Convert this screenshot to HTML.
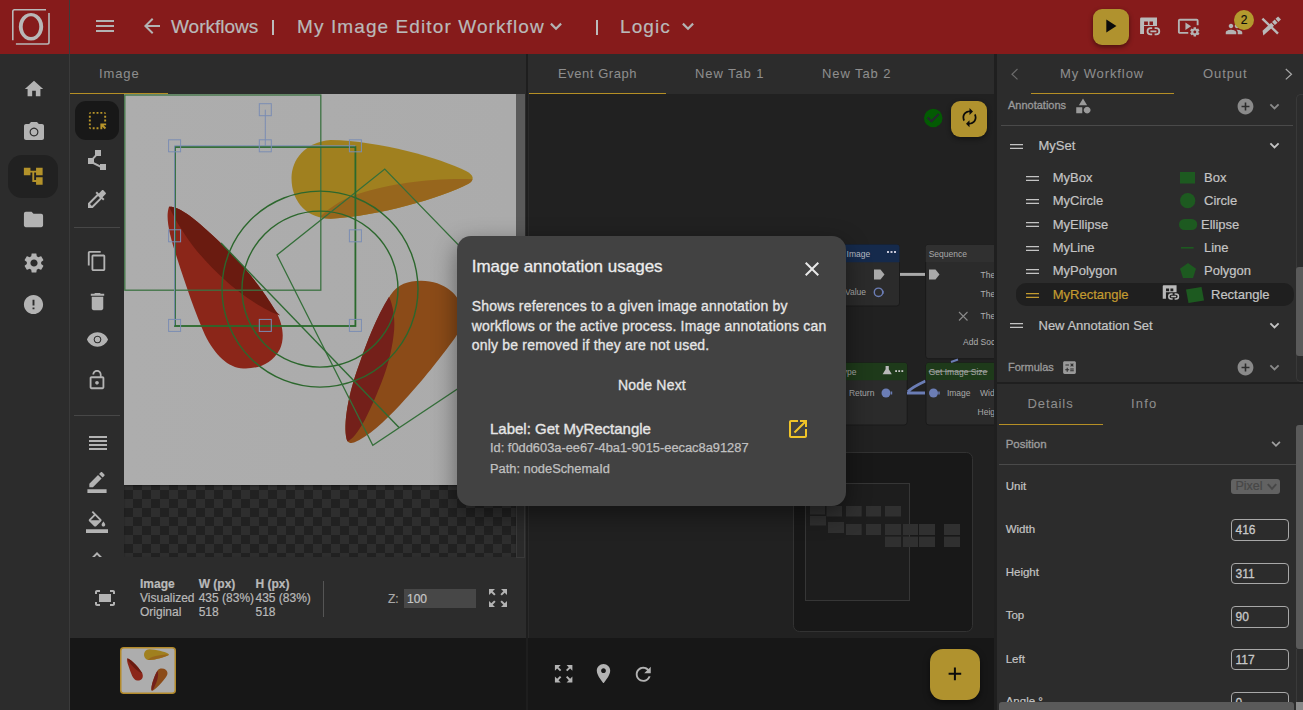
<!DOCTYPE html>
<html><head><meta charset="utf-8">
<style>
*{box-sizing:border-box;margin:0;padding:0}
html,body{width:1303px;height:710px;overflow:hidden;background:#2c2c2c;font-family:"Liberation Sans",sans-serif;color:#b0b0b0;-webkit-text-stroke:0.2px currentColor}
.a{position:absolute}
svg{display:block}
.hdr{left:0;top:0;width:1303px;height:54px;background:#861b1b}
.ht{top:16px;font-size:19px;color:#b9b9b9;white-space:nowrap;line-height:22px}
.side{left:0;top:54px;width:69px;height:656px;background:#2c2c2c}
.vline{background:#3f3f3f}
.tab{font-size:13px;color:#8e8e8e;letter-spacing:0.9px;white-space:nowrap;line-height:16px;-webkit-text-stroke:0.05px #8e8e8e}
.uline{height:1.2px;background:#b58f25}
.ic{fill:#b3b3b3}
</style></head><body>
<!-- HEADER -->
<div class="a hdr"></div>
<svg class="a" style="left:0;top:0" width="69" height="54">
 <path d="M12.8 40.2 V11.5 Q12.8 9.8 14.5 9.8 H46" fill="none" stroke="#b8b8b8" stroke-width="1.6"/>
 <path d="M49 13.1 V42.3 Q49 44 47.3 44 H15.9" fill="none" stroke="#b8b8b8" stroke-width="1.6"/>
 <path fill-rule="evenodd" fill="#b8b8b8" d="M31 12.9 a12.2 13.8 0 1 0 0.01 0 Z M31 16.3 a8.3 10.4 0 1 1 -0.01 0 Z"/>
</svg>
<svg class="a ic" style="left:93px;top:14px" width="24" height="24" viewBox="0 0 24 24"><path d="M3 18h18v-2H3v2zm0-5h18v-2H3v2zm0-7v2h18V6H3z"/></svg>
<svg class="a ic" style="left:140px;top:14px" width="24" height="24" viewBox="0 0 24 24"><path d="M20 11H7.83l5.59-5.59L12 4l-8 8 8 8 1.41-1.41L7.83 13H20v-2z"/></svg>
<div class="a ht m" style="left:171px">Workflows</div>
<div class="a" style="left:272.3px;top:20px;width:2.2px;height:15px;background:#bcbcbc"></div>
<div class="a ht m" style="left:297px;letter-spacing:1.1px">My Image Editor Workflow</div>
<svg class="a" style="left:544px;top:14px" width="24" height="24" viewBox="0 0 24 24"><path fill="none" stroke="#b3b3b3" stroke-width="2.2" d="M6.9 9.6 L12 14.7 L17.1 9.6"/></svg>
<div class="a" style="left:595.6px;top:20px;width:2.2px;height:15px;background:#bcbcbc"></div>
<div class="a ht m" style="left:620px;letter-spacing:1.1px">Logic</div>
<svg class="a" style="left:676.3px;top:14px" width="24" height="24" viewBox="0 0 24 24"><path fill="none" stroke="#b3b3b3" stroke-width="2.2" d="M6.9 9.6 L12 14.7 L17.1 9.6"/></svg>
<div class="a" style="left:1093px;top:9px;width:36px;height:36px;border-radius:9px;background:#b0922e;box-shadow:0 2px 5px rgba(0,0,0,.45)"></div>
<svg class="a" style="left:1099.2px;top:15.1px" width="22" height="22" viewBox="0 0 24 24"><path d="M8 5v14l11-7z" fill="#0b0b0b"/></svg>
<svg class="a" style="left:1138px;top:16px" width="24" height="22" viewBox="0 0 24 22">
 <path fill="#b9b9b9" fill-rule="evenodd" d="M2.1 2.7 Q2.1 1.5 3.3 1.5 H19 V10.1 H6 V17.9 H2.1 Z M6.1 5.6 h3.8 v3.4 h-3.8 Z M11.5 5.6 h3.5 v3.4 h-3.5 Z"/>
 <path fill="none" stroke="#b9b9b9" stroke-width="1.8" d="M14.2 12.2 h-1.6 a3.1 3.1 0 0 0 0 6.2 h1.6 M16.6 12.2 h1.6 a3.1 3.1 0 0 1 0 6.2 h-1.6 M12.4 15.3 h6"/>
</svg>
<svg class="a ic" style="left:1177px;top:14.5px" width="22.5" height="22.5" viewBox="0 0 24 24"><path d="M3 6h18v5h2V6c0-1.1-.9-2-2-2H3c-1.1 0-2 .9-2 2v12c0 1.1.9 2 2 2h9v-2H3V6z M15 12L9 8v8z M22.71 18.43c.03-.29.04-.58.01-.86l1.07-.85c.1-.08.12-.21.06-.32l-1.03-1.79c-.06-.11-.19-.15-.31-.11L21.23 15c-.23-.17-.48-.31-.75-.42l-.2-1.360c-.02-.13-.12-.22-.25-.22h-2.07c-.13 0-.23.09-.25.21l-.2 1.36c-.26.11-.51.26-.74.42l-1.28-.5c-.12-.05-.25 0-.31.11l-1.03 1.79c-.06.11-.04.24.06.32l1.07.86c-.03.29-.04.58-.01.86l-1.070.85c-.1.08-.12.21-.06.32l1.03 1.79c.06.11.19.15.31.11l1.27-.5c.23.17.48.31.75.42l.2 1.36c.02.13.12.22.25.22h2.07c.13 0 .23-.09.25-.21l.2-1.36c.26-.11.51-.26.74-.42l1.28.5c.12.05.25 0 .31-.11l1.03-1.79c.06-.11.04-.24-.06-.32l-1.09-.86zM19 19.5c-.83 0-1.5-.67-1.5-1.5s.67-1.5 1.5-1.5 1.5.67 1.5 1.5-.67 1.5-1.5 1.5z"/></svg>
<svg class="a ic" style="left:1225.3px;top:19.8px" width="18" height="18" viewBox="0 0 24 24"><path d="M16 11c1.66 0 2.99-1.34 2.99-3S17.66 5 16 5c-1.66 0-3 1.34-3 3s1.34 3 3 3zm-8 0c1.660 0 2.99-1.34 2.99-3S9.66 5 8 5C6.34 5 5 6.34 5 8s1.34 3 3 3zm0 2c-2.33 0-7 1.17-7 3.5V19h14v-2.5c0-2.33-4.67-3.5-7-3.5zm8 0c-.29 0-.62.02-.97.05 1.16.84 1.97 1.97 1.97 3.45V19h6v-2.5c0-2.33-4.67-3.5-7-3.5z"/></svg>
<div class="a" style="left:1234px;top:10px;width:20px;height:20px;border-radius:50%;background:#b39a2e;color:#0b0b0b;font-size:12px;line-height:20px;text-align:center">2</div>
<svg class="a" style="left:1260px;top:16px" width="22" height="20" viewBox="0 0 22 20">
 <path d="M2.4 2.6 L18 17.6" stroke="#b9b9b9" stroke-width="2.4" fill="none"/>
 <g transform="translate(10.75 10) rotate(-42.4)" fill="#b9b9b9">
  <path d="M-11.85 2 L-9.2 -2.1 H2.6 V2.1 Z"/>
  <rect x="3.7" y="-2.1" width="3.6" height="4.2"/>
  <rect x="8.4" y="-2.1" width="3.5" height="4.2"/>
 </g>
</svg>
<div class="a vline" style="left:69px;top:0;width:1px;height:710px;background:#3c3c3c"></div>

<!-- LEFT SIDEBAR -->
<div class="a" style="left:0;top:54px;width:69px;height:656px;background:#2c2c2c"></div>
<svg class="a ic" style="left:23px;top:77.5px" width="22" height="22" viewBox="0 0 24 24"><path d="M10 20v-6h4v6h5v-8h3L12 3 2 12h3v8z"/></svg>
<svg class="a ic" style="left:22px;top:120px" width="24" height="24" viewBox="0 0 24 24"><path fill-rule="evenodd" d="M9 2L7.17 4H4c-1.1 0-2 .9-2 2v12c0 1.1.9 2 2 2h16c1.1 0 2-.9 2-2V6c0-1.1-.9-2-2-2h-3.17L15 2H9z M12 7.6a4.4 4.4 0 1 0 0.01 0z M12 8.7a3.3 3.3 0 1 1 -0.01 0z"/></svg>
<div class="a" style="left:8px;top:155px;width:50px;height:43px;border-radius:14px;background:#212121"></div>
<svg class="a" style="left:22.3px;top:164.8px" width="22.5" height="22.5" viewBox="0 0 24 24"><path fill="#b3922a" d="M22 11V3h-7v3H9V3H2v8h7V8h2v10h4v3h7v-8h-7v3h-2V8h2v3z"/></svg>
<svg class="a ic" style="left:22px;top:207.7px" width="23" height="23" viewBox="0 0 24 24"><path d="M10 4H4c-1.1 0-1.99.9-1.99 2L2 18c0 1.1.9 2 2 2h16c1.1 0 2-.9 2-2V8c0-1.1-.9-2-2-2h-8l-2-2z"/></svg>
<svg class="a ic" style="left:21.5px;top:250.5px" width="24" height="24" viewBox="0 0 24 24"><path d="M19.14 12.94c.04-.3.06-.61.06-.94 0-.32-.02-.64-.07-.94l2.03-1.58c.18-.14.23-.41.12-.61l-1.92-3.32c-.12-.22-.37-.29-.59-.22l-2.39.96c-.5-.38-1.03-.7-1.62-.94l-.36-2.54c-.04-.24-.24-.41-.48-.41h-3.84c-.24 0-.43.17-.47.41l-.36 2.54c-.59.24-1.13.57-1.62.94l-2.39-.96c-.22-.08-.47 0-.59.22L2.74 8.87c-.12.21-.08.47.12.61l2.03 1.58c-.05.3-.09.63-.09.94s.02.64.07.94l-2.03 1.58c-.18.14-.23.41-.12.61l1.92 3.32c.12.22.37.29.59.22l2.39-.96c.5.38 1.03.7 1.62.94l.36 2.54c.05.24.24.41.48.41h3.84c.24 0 .44-.17.47-.41l.36-2.54c.59-.24 1.13-.56 1.62-.94l2.39.96c.22.08.47 0 .59-.22l1.92-3.32c.12-.22.07-.47-.12-.61l-2.01-1.58zM12 15.6c-1.98 0-3.6-1.62-3.6-3.6s1.620-3.6 3.6-3.6 3.6 1.62 3.6 3.6-1.62 3.6-3.6 3.6z"/></svg>
<svg class="a ic" style="left:22px;top:292.7px" width="23" height="23" viewBox="0 0 24 24"><path d="M12 2C6.48 2 2 6.48 2 12s4.48 10 10 10 10-4.48 10-10S17.52 2 12 2zm1 15h-2v-2h2v2zm0-4h-2V7h2v6z"/></svg>
<div class="a" style="left:69px;top:54px;width:1px;height:656px;background:#3a3a3a"></div>

<!-- IMAGE PANEL -->
<div class="a" style="left:70px;top:54px;width:456px;height:40px;background:#2c2c2c"></div>
<div class="a tab" style="left:99px;top:66px">Image</div>
<div class="a uline" style="left:70px;top:93px;width:98px"></div>
<svg class="a" style="left:124px;top:94px" width="392" height="391" viewBox="124 94 392 391">
 <defs><linearGradient id="cg" x1="0" y1="0" x2="1" y2="0"><stop offset="0" stop-color="#adadad"/><stop offset="1" stop-color="#ababab"/></linearGradient></defs>
 <rect x="124" y="94" width="392" height="391" fill="url(#cg)"/>
 <!-- yellow -->
 <path fill="#a0801f" d="M330.7 140 C380 141 440 158 466 171 C474 175 475 180 468 184 C440 198 380 216 330.7 218.7 C308 218.7 291.5 203 291.5 178 C291.5 160 305 142 330.7 140 Z"/>
 <path fill="#97661d" d="M320 216.7 C333 205 345 198 356.7 194.5 C372 189 395 183 433.5 179.9 C450 178.9 462 178.6 472.5 179.3 C472 181.5 470.5 183 468 184 C440 198 380 216 330.7 218.7 C326 218.7 323 218 320 216.7 Z"/>
 <!-- red -->
 <path fill="#8b2619" d="M169 206.7 C178 206 192 216 210 233 C240 260 262 288 275 310 C283 323 285 338 280 349 C272 364 258 369 243.4 368.4 C228 368 215 355 205 335 C195 312 186 286 177 258 C170 236 165 218 169 206.7 Z"/>
 <path fill="#6a1b10" d="M169 206.7 C178 206 192 216 210 233 C240 260 262 288 275 310 C278 314 280 315 280 315.4 C265 311 240 294 225 280 C205 262 185 240 169 206.7 Z"/>
 <!-- orange -->
 <path fill="#8b4b18" d="M347.4 441.3 C343 430 346 400 359.4 363.7 C367 342 376 318 390.2 295.4 C398 284 408 280.7 421 280.7 C445 281 460 295 462 310 C464 322 460 332 452 342 C440 358 425 378 400 405 C385 421 368 437 354 442.6 C351 443.5 349 443 347.4 441.3 Z"/>
 <path fill="#74201a" d="M347.4 441.3 C343 430 346 400 359.4 363.7 C367 342 376 318 389 296.8 C393 305 395 318 394.2 328.9 C393 345 389 362 383.5 377 C378 392 371 408 364.8 420 C358 432 352 440 347.4 441.3 Z"/>
 <!-- shapes -->
 <g fill="none" stroke="#2c672d" stroke-width="1.4">
  <rect x="124.8" y="95" width="196" height="195.2" stroke="#3d7242" stroke-width="1.3"/>
  <circle cx="320" cy="289.1" r="98"/>
  <circle cx="320" cy="289.1" r="78"/>
  <path d="M384.8 169.1 L543 332 L372.8 445.3 L277 255 Z" stroke="#356f3a" stroke-width="1.3"/>
  <path d="M221 243 L399 427.4" stroke="#2f6a33" stroke-width="1.4"/>
  <rect x="175" y="147" width="180.4" height="179" stroke-width="1.8" stroke="#2a6a2c"/>
 </g>
 <g fill="none" stroke="#7b8db3" stroke-width="1">
  <path d="M174.6 145.8 H355.4 M174.6 145.8 V325.4"/>
  <path d="M265.3 109.7 V146"/>
  <rect x="168.6" y="139.8" width="12" height="12"/>
  <rect x="259.3" y="139.8" width="12" height="12"/>
  <rect x="349.4" y="139.8" width="12" height="12"/>
  <rect x="168.6" y="229.8" width="12" height="12"/>
  <rect x="349.4" y="229.8" width="12" height="12"/>
  <rect x="168.6" y="319.4" width="12" height="12"/>
  <rect x="259.3" y="319.4" width="12" height="12"/>
  <rect x="349.4" y="319.4" width="12" height="12"/>
  <rect x="259.3" y="103.7" width="12" height="12"/>
 </g>
</svg>
<div class="a" style="left:75px;top:101px;width:44px;height:39px;border-radius:11px;background:#181818"></div>
<svg class="a" style="left:85.8px;top:108.8px" width="23" height="23" viewBox="0 0 24 24"><path fill="#b8952a" d="M17 5h-2V3h2v2zm-2 16h2v-2.59L19.59 21 21 19.59 18.41 17H21v-2h-6v6zm4-12h2V7h-2v2zm0 4h2v-2h-2v2zm-8 8h2v-2h-2v2zM7 5h2V3H7v2zM3 17h2v-2H3v2zm2 4v-2H3c0 1.1.9 2 2 2zM19 3v2h2c0-1.1-.9-2-2-2zm-8 2h2V3h-2v2zM3 9h2V7H3v2zm4 12h2v-2H7v2zm-4-8h2v-2H3v2zm0-8h2V3c-1.1 0-2 .9-2 2z"/></svg>
<svg class="a ic" style="left:85.4px;top:148.4px" width="24" height="24" viewBox="0 0 24 24"><path d="M15 16v1.26l-6-3v-3.17L11.7 8H16V2h-6v4.9L7.3 10H3v6h5l7 3.5V22h6v-6z"/></svg>
<svg class="a ic" style="left:85px;top:187px" width="24" height="24" viewBox="0 0 24 24"><path d="M20.71 5.63l-2.34-2.34c-.39-.39-1.02-.39-1.41 0l-3.12 3.12-1.93-1.91-1.41 1.41 1.42 1.42L3 16.25V21h4.75l8.92-8.92 1.42 1.42 1.41-1.41-1.92-1.92 3.12-3.12c.4-.4.4-1.03.01-1.42zM6.92 19L5 17.08l8.06-8.06 1.92 1.92L6.92 19z"/></svg>
<div class="a" style="left:74px;top:227px;width:46px;height:1px;background:#474747"></div>
<svg class="a ic" style="left:85.9px;top:250px" width="22" height="22" viewBox="0 0 24 24"><path d="M16 1H4c-1.1 0-2 .9-2 2v14h2V3h12V1zm3 4H8c-1.1 0-2 .9-2 2v14c0 1.1.9 2 2 2h11c1.1 0 2-.9 2-2V7c0-1.1-.9-2-2-2zm0 16H8V7h11v14z"/></svg>
<svg class="a ic" style="left:86px;top:290px" width="23" height="23" viewBox="0 0 24 24"><path d="M6 19c0 1.1.9 2 2 2h8c1.1 0 2-.9 2-2V7H6v12zM19 4h-3.5l-1-1h-5l-1 1H5v2h14V4z"/></svg>
<svg class="a ic" style="left:85.8px;top:328.3px" width="23" height="23" viewBox="0 0 24 24"><path fill-rule="evenodd" d="M12 4.5C7 4.5 2.73 7.61 1 12c1.73 4.39 6 7.5 11 7.5s9.27-3.11 11-7.5c-1.73-4.39-6-7.5-11-7.5z M12 8a4 4 0 1 0 0.01 0z M12 9.1a2.9 2.9 0 1 1 -0.01 0z"/></svg>
<svg class="a ic" style="left:86.3px;top:368.9px" width="22" height="22" viewBox="0 0 24 24"><path d="M12 17c1.1 0 2-.9 2-2s-.9-2-2-2-2 .9-2 2 .9 2 2 2zm6-9h-1V6c0-2.76-2.24-5-5-5S7 3.24 7 6h1.9c0-1.71 1.39-3.1 3.1-3.1 1.71 0 3.1 1.39 3.1 3.1v2H6c-1.1 0-2 .9-2 2v10c0 1.1.9 2 2 2h12c1.1 0 2-.9 2-2V10c0-1.1-.9-2-2-2zm0 12H6V10h12v10z"/></svg>
<div class="a" style="left:74px;top:415px;width:46px;height:1px;background:#474747"></div>
<svg class="a ic" style="left:85.6px;top:430.5px" width="24" height="24" viewBox="0 0 24 24"><path d="M3 15h18v-2H3v2zm0 4h18v-2H3v2zm0-8h18V9H3v2zm0-6v2h18V5H3z"/></svg>
<svg class="a ic" style="left:85px;top:470px" width="24" height="23" viewBox="0 0 24 24"><path d="M22 24H2v-4h20v4zM13.06 5.19l3.75 3.75L7.75 18H4v-3.75l9.06-9.06zm4.82 2.68l-3.75-3.75 1.83-1.83c.39-.39 1.02-.39 1.41 0l2.34 2.34c.39.39.39 1.02 0 1.41l-1.83 1.83z"/></svg>
<svg class="a ic" style="left:86px;top:511px" width="22" height="22" viewBox="0 0 24 24"><path d="M16.56 8.94L7.62 0 6.21 1.41l2.38 2.38-5.15 5.15c-.59.59-.59 1.54 0 2.12l5.5 5.5c.29.29.68.44 1.06.44s.77-.15 1.06-.44l5.5-5.5c.59-.58.59-1.53 0-2.12zM5.21 10L10 5.21 14.79 10H5.21zM19 11.5s-2 2.17-2 3.5c0 1.1.9 2 2 2s2-.9 2-2c0-1.33-2-3.5-2-3.5zM0 20h24v4H0v-4z"/></svg>
<div class="a" style="left:85px;top:544px;width:24px;height:13px;overflow:hidden"><svg class="ic" width="24" height="24" viewBox="0 0 24 24"><path d="M12 8l-6 6 1.41 1.41L12 10.83l4.59 4.58L18 14z"/></svg></div>
<svg class="a ic" style="left:92.7px;top:585.8px" width="24" height="24" viewBox="0 0 24 24"><path d="M17 4h3c1.1 0 2 .9 2 2v2h-2V6h-3V4zM4 8V6h3V4H4c-1.1 0-2 .9-2 2v2h2zm16 8v2h-3v2h3c1.1 0 2-.9 2-2v-2h-2zM7 18H4v-2H2v2c0 1.1.9 2 2 2h3v-2zM18 8H6v8h12V8z"/></svg>
<div class="a" style="left:124px;top:485px;width:392px;height:72px;background-color:#212121;background-image:conic-gradient(#2e2e2e 25%,#212121 0 50%,#2e2e2e 0 75%,#212121 0);background-size:18px 18px;background-position:0 5px;box-shadow:inset 0 1px 2px rgba(0,0,0,.35)"></div>
<div class="a" style="left:516px;top:94px;width:9px;height:464px;background:#2a2a2a;border:1px solid #393939;border-top:0"></div>
<div class="a" style="left:516px;top:94px;width:9px;height:380px;background:#5a5a5a"></div>
<div class="a" style="left:140px;top:577px;font-size:12px;line-height:14px;color:#b9b9b9;white-space:nowrap">
 <div class="a" style="left:0;top:0;font-weight:bold">Image</div>
 <div class="a" style="left:58.7px;top:0;font-weight:bold">W (px)</div>
 <div class="a" style="left:115.5px;top:0;font-weight:bold">H (px)</div>
 <div class="a" style="left:0;top:13.5px">Visualized</div>
 <div class="a" style="left:58.7px;top:13.5px">435 (83%)</div>
 <div class="a" style="left:115.5px;top:13.5px">435 (83%)</div>
 <div class="a" style="left:0;top:27.7px">Original</div>
 <div class="a" style="left:58.7px;top:27.7px">518</div>
 <div class="a" style="left:115.5px;top:27.7px">518</div>
</div>
<div class="a" style="left:323px;top:581px;width:1px;height:36px;background:#555"></div>
<div class="a" style="left:388px;top:592px;font-size:12px;line-height:15px;color:#a9a9a9">Z:</div>
<div class="a" style="left:404px;top:589px;width:72px;height:19px;background:#474747;font-size:12px;line-height:20px;color:#c6c6c6;padding-left:3px">100</div>
<svg class="a ic" style="left:486px;top:586px" width="24" height="24" viewBox="0 0 24 24"><path d="M15 3l2.3 2.3-2.89 2.87 1.42 1.42L18.7 6.7 21 9V3zM3 9l2.3-2.3 2.87 2.89 1.42-1.42L6.7 5.3 9 3H3zm6 12l-2.3-2.3 2.89-2.87-1.42-1.42L5.3 17.3 3 15v6zm12-6l-2.3 2.3-2.87-2.89-1.42 1.42 2.89 2.87L15 21h6z"/></svg>
<div class="a" style="left:70px;top:638px;width:456px;height:72px;background:#171717"></div>
<svg class="a" style="left:120px;top:647px" width="56" height="47" viewBox="0 0 56 47">
 <rect x="0.75" y="0.75" width="54.5" height="45.5" rx="3" fill="#adadad" stroke="#b38a2a" stroke-width="1.5"/>
 <g transform="translate(-15.9 -16.9) scale(0.137)"><!-- yellow -->
 <path fill="#a0801f" d="M330.7 140 C380 141 440 158 466 171 C474 175 475 180 468 184 C440 198 380 216 330.7 218.7 C308 218.7 291.5 203 291.5 178 C291.5 160 305 142 330.7 140 Z"/>
 <path fill="#97661d" d="M320 216.7 C333 205 345 198 356.7 194.5 C372 189 395 183 433.5 179.9 C450 178.9 462 178.6 472.5 179.3 C472 181.5 470.5 183 468 184 C440 198 380 216 330.7 218.7 C326 218.7 323 218 320 216.7 Z"/>
 <!-- red -->
 <path fill="#8b2619" d="M169 206.7 C178 206 192 216 210 233 C240 260 262 288 275 310 C283 323 285 338 280 349 C272 364 258 369 243.4 368.4 C228 368 215 355 205 335 C195 312 186 286 177 258 C170 236 165 218 169 206.7 Z"/>
 <path fill="#6a1b10" d="M169 206.7 C178 206 192 216 210 233 C240 260 262 288 275 310 C278 314 280 315 280 315.4 C265 311 240 294 225 280 C205 262 185 240 169 206.7 Z"/>
 <!-- orange -->
 <path fill="#8b4b18" d="M347.4 441.3 C343 430 346 400 359.4 363.7 C367 342 376 318 390.2 295.4 C398 284 408 280.7 421 280.7 C445 281 460 295 462 310 C464 322 460 332 452 342 C440 358 425 378 400 405 C385 421 368 437 354 442.6 C351 443.5 349 443 347.4 441.3 Z"/>
 <path fill="#74201a" d="M347.4 441.3 C343 430 346 400 359.4 363.7 C367 342 376 318 389 296.8 C393 305 395 318 394.2 328.9 C393 345 389 362 383.5 377 C378 392 371 408 364.8 420 C358 432 352 440 347.4 441.3 Z"/>
 </g>
</svg>

<!-- dividers -->
<div class="a" style="left:526px;top:54px;width:2px;height:656px;background:#1e1e1e"></div>

<!-- GRAPH PANEL -->
<div class="a" style="left:528px;top:94px;width:466px;height:544px;background:#212121"></div>
<svg class="a" style="left:922px;top:106.5px" width="22" height="22" viewBox="0 0 24 24"><circle cx="12.3" cy="12" r="10.1" fill="#035a03"/><path d="M6.1 11.5 L10.3 15.6 L18.4 7.6" fill="none" stroke="#262630" stroke-width="2.2"/></svg>
<div class="a" style="left:951px;top:101px;width:36px;height:36px;border-radius:9px;background:#b0922e;box-shadow:0 2px 5px rgba(0,0,0,.45)"></div>
<svg class="a" style="left:958.5px;top:107.4px" width="21" height="21" viewBox="0 0 24 24"><g transform="translate(24 0) scale(-1 1)"><path fill="#0b0b0b" d="M12 4V1L8 5l4 4V6c3.31 0 6 2.69 6 6 0 1.01-.25 1.97-.7 2.8l1.46 1.46C19.54 15.03 20 13.57 20 12c0-4.42-3.58-8-8-8zm0 14c-3.31 0-6-2.69-6-6 0-1.01.25-1.970.7-2.8L5.24 7.74C4.46 8.97 4 10.43 4 12c0 4.42 3.58 8 8 8v3l4-4-4-4v3z"/></g></svg>
<div class="a" style="left:528px;top:94px;width:1px;height:616px;background:#2a2a2a"></div>
<!-- nodes -->
<div class="a" style="left:528px;top:94px;width:466px;height:544px;overflow:hidden">
 <svg class="a" style="left:0;top:0" width="466" height="544" viewBox="528 94 466 544">
  <g font-family="Liberation Sans" font-size="8.5">
  <!-- node Image -->
  <rect x="760" y="244.5" width="139.5" height="61.5" rx="3" fill="#2b2b2b" stroke="#1a1a1a"/>
  <path d="M760 262.2 V247.5 a3 3 0 0 1 3 -3 H896.5 a3 3 0 0 1 3 3 V262.2Z" fill="#152a4c"/>
  <text x="846.6" y="256.5" fill="#b8bcc4">Image</text>
  <g fill="#c8c8d8"><rect x="887" y="251" width="2" height="2"/><rect x="890.5" y="251" width="2" height="2"/><rect x="894" y="251" width="2" height="2"/></g>
  <path d="M874 269.5 h6.5 l4 5 l-4 5 h-6.5z" fill="#a9a9a9"/>
  <text x="866" y="295.3" fill="#a8a8a8" text-anchor="end">Value</text>
  <circle cx="878.5" cy="292.3" r="4.2" fill="none" stroke="#6b7db5" stroke-width="1.4"/><path d="M883 290.8 v3" stroke="#6b7db5" stroke-width="1.4"/>
  <path d="M900 274.4 H925" stroke="#a9a9a9" stroke-width="3"/>
  <!-- node Sequence -->
  <rect x="925.6" y="244.7" width="120" height="114" rx="3" fill="#2b2b2b" stroke="#1a1a1a"/>
  <path d="M925.6 262 V247.7 a3 3 0 0 1 3 -3 H1045 V262Z" fill="#303030"/>
  <text x="928.7" y="256.5" fill="#a8a8a8">Sequence</text>
  <path d="M929 269.5 h6.5 l4 5 l-4 5 h-6.5z" fill="#a9a9a9"/>
  <text x="980.6" y="278.3" fill="#b0b0b0">The</text>
  <text x="980.6" y="297" fill="#b0b0b0">The</text>
  <text x="980.6" y="319.3" fill="#b0b0b0">The</text>
  <path d="M959 312 l8.5 8.5 M967.5 312 l-8.5 8.5" stroke="#8a8a8a" stroke-width="1.1"/>
  <text x="963" y="345" fill="#b0b0b0">Add Soc</text>
  <!-- node ype -->
  <rect x="780" y="362.7" width="127.2" height="62.3" rx="3" fill="#2b2b2b" stroke="#1a1a1a"/>
  <path d="M780 380.2 V365.7 a3 3 0 0 1 3 -3 H904.2 a3 3 0 0 1 3 3 V380.2Z" fill="#1e3a1a"/>
  <text x="856.5" y="374.5" fill="#a8a8a8" text-anchor="end">ype</text>
  <path d="M885.6 366 h3.2 v3.2 l3 5 h-9.2 l3 -5z" fill="#b9b9b9"/>
  <g fill="#c8c8c8"><rect x="895.2" y="370.2" width="1.8" height="1.8"/><rect x="898.3" y="370.2" width="1.8" height="1.8"/><rect x="901.4" y="370.2" width="1.8" height="1.8"/></g>
  <text x="848.9" y="396.2" fill="#a8a8a8">Return</text>
  <circle cx="886" cy="393" r="4.5" fill="#6b7db5"/><path d="M891.5 391.5 v3" stroke="#6b7db5" stroke-width="1.4"/>
  <path d="M907 393 H925 M925.5 381 C917 385 911 388.5 908 391.5" fill="none" stroke="#6b7db5" stroke-width="2.8"/>
  <!-- node Get Image Size -->
  <rect x="926" y="362.7" width="120" height="62.3" rx="3" fill="#2b2b2b" stroke="#1a1a1a"/>
  <path d="M926 380 V365.7 a3 3 0 0 1 3 -3 H1045 V380Z" fill="#1e3a1a"/>
  <text x="928.7" y="374.5" fill="#a8a8a8">Get Image Size</text>
  <path d="M928.7 371.3 H987.7" stroke="#a8a8a8" stroke-width="0.8"/>
  <circle cx="933.5" cy="393" r="4.5" fill="#6b7db5"/><path d="M939 391.5 v3" stroke="#6b7db5" stroke-width="1.4"/>
  <text x="946.9" y="396.2" fill="#a8a8a8">Image</text>
  <text x="980" y="396.2" fill="#a8a8a8">Wid</text>
  <text x="977.6" y="415" fill="#a8a8a8">Heig</text>
  <path d="M951 362 L958 359.5" stroke="#6b7db5" stroke-width="2"/>
  </g>
  <!-- minimap -->
  <rect x="793.5" y="452.5" width="179" height="179" rx="6" fill="#181818" stroke="#323232"/>
  <rect x="805.5" y="483.5" width="104" height="117" fill="#1d1d1d" stroke="#363636"/>
  <g fill="#303030">
   <rect x="810" y="506" width="15" height="8.5"/><rect x="826.5" y="506" width="15.5" height="10.5"/><rect x="846" y="506" width="15.7" height="10.5"/><rect x="866" y="506" width="15" height="10.5"/><rect x="885" y="506" width="16" height="10.5"/>
   <rect x="810" y="516" width="16" height="9.5"/><rect x="828" y="522" width="16" height="11"/>
   <rect x="846" y="524" width="15.7" height="11"/><rect x="866" y="524" width="15" height="11"/><rect x="885" y="524" width="16" height="11"/><rect x="903" y="524" width="15" height="11"/><rect x="919" y="524" width="16" height="11"/><rect x="944" y="524" width="16" height="11"/>
   <rect x="885" y="536.6" width="16" height="10.4"/><rect x="903" y="536.6" width="15" height="10.4"/><rect x="919" y="536.6" width="16" height="10.4"/><rect x="944" y="536.6" width="16" height="10.4"/>
  </g>
 </svg>
</div>
<div class="a" style="left:528px;top:638px;width:466px;height:72px;background:#171717"></div>
<svg class="a ic" style="left:551.8px;top:662.2px" width="23.3" height="23.3" viewBox="0 0 24 24"><path d="M15 3l2.3 2.3-2.89 2.87 1.42 1.42L18.7 6.7 21 9V3zM3 9l2.3-2.3 2.87 2.89 1.42-1.42L6.7 5.3 9 3H3zm6 12l-2.3-2.3 2.89-2.87-1.42-1.42L5.3 17.3 3 15v6zm12-6l-2.3 2.3-2.87-2.89-1.42 1.42 2.89 2.87L15 21h6z"/></svg>
<svg class="a ic" style="left:591.5px;top:662px" width="23" height="23" viewBox="0 0 24 24"><path d="M12 2C8.13 2 5 5.13 5 9c0 5.25 7 13 7 13s7-7.75 7-13c0-3.87-3.13-7-7-7zm0 9.5c-1.38 0-2.5-1.12-2.5-2.5s1.12-2.5 2.5-2.5 2.5 1.12 2.5 2.5-1.12 2.5-2.5 2.5z"/></svg>
<svg class="a ic" style="left:631.5px;top:662.5px" width="22.5" height="22.5" viewBox="0 0 24 24"><path d="M17.65 6.35C16.2 4.9 14.21 4 12 4c-4.42 0-7.99 3.58-7.990 8s3.57 8 7.99 8c3.73 0 6.84-2.55 7.73-6h-2.08c-.82 2.33-3.04 4-5.65 4-3.31 0-6-2.69-6-6s2.69-6 6-6c1.66 0 3.14.69 4.22 1.78L13 11h7V4l-2.35 2.35z"/></svg>
<div class="a" style="left:930px;top:649px;width:50px;height:51px;border-radius:13px;background:#b0922e;box-shadow:0 3px 6px rgba(0,0,0,.5)"></div>
<svg class="a" style="left:943px;top:662px" width="24" height="24" viewBox="0 0 24 24"><path stroke="#0b0b0b" stroke-width="2" d="M11.9 5.6V18.2M5.6 11.8H18.2"/></svg>
<div class="a tab" style="left:558px;top:66px;letter-spacing:0.55px">Event Graph</div>
<div class="a tab" style="left:695px;top:66px">New Tab 1</div>
<div class="a tab" style="left:822px;top:66px">New Tab 2</div>
<div class="a uline" style="left:529px;top:93px;width:137px"></div>

<div class="a" style="left:994px;top:54px;width:3px;height:656px;background:#1f1f1f"></div>

<!-- RIGHT PANEL -->
<svg class="a" style="left:1008px;top:66px" width="14" height="16" viewBox="0 0 14 16"><path d="M9.5 3 L4 8.2 L9.5 13.4" fill="none" stroke="#6a6a6a" stroke-width="1.2"/></svg>
<svg class="a" style="left:1282px;top:66px" width="14" height="16" viewBox="0 0 14 16"><path d="M3.8 3 L9.5 8.2 L3.8 13.4" fill="none" stroke="#a8a8a8" stroke-width="1.2"/></svg>
<div class="a" style="left:1296px;top:94px;width:10px;height:288px;border:1px solid #393939;border-right:0;border-radius:5px 0 0 5px"></div>
<div class="a" style="left:1296px;top:267px;width:7px;height:89px;background:#5a5a5a;border-radius:3px 0 0 3px"></div>
<div class="a" style="left:1008px;top:98px;font-size:11px;line-height:14px;color:#9a9a9a;-webkit-text-stroke:0.3px #9a9a9a">Annotations</div>
<svg class="a" style="left:1074px;top:97px" width="18" height="18" viewBox="0 0 24 24"><path fill="#9a9a9a" d="M12 2l-5.5 9h11z M17.5 13a4.5 4.5 0 1 0 0.01 0z M3 13.5h8v8H3z"/></svg>
<svg class="a" style="left:1236px;top:97px" width="19" height="19" viewBox="0 0 24 24"><path fill="#8a8a8a" d="M12 2C6.48 2 2 6.48 2 12s4.48 10 10 10 10-4.48 10-10S17.52 2 12 2zm5 11h-4v4h-2v-4H7v-2h4V7h2v4h4v2z"/></svg>
<svg class="a" style="left:1265px;top:97px" width="19" height="19" viewBox="0 0 24 24"><path fill="none" stroke="#8a8a8a" stroke-width="2.3" d="M6.8 9.3 L12 14.5 L17.2 9.3"/></svg>
<div class="a" style="left:1001px;top:125px;width:292px;height:1px;background:#4a4a4a"></div>
<svg class="a" style="left:1010px;top:142.5px" width="13" height="7" viewBox="0 0 13 7"><path d="M0 1.6h13 M0 5.4h13" stroke="#c4c4c4" stroke-width="1.2"/></svg>
<div class="a" style="left:1038.5px;top:138px;font-size:13px;line-height:15px;color:#c4c4c4">MySet</div>
<svg class="a" style="left:1265px;top:136px" width="19" height="19" viewBox="0 0 24 24"><path fill="none" stroke="#c4c4c4" stroke-width="2.3" d="M6.8 9.3 L12 14.5 L17.2 9.3"/></svg>
<div class="a" style="left:1016px;top:283px;width:278px;height:22.5px;border-radius:10px;background:#1f1f1f"></div>
<svg class="a" style="left:1025.5px;top:174.5px" width="13" height="7" viewBox="0 0 13 7"><path d="M0 1.6h13 M0 5.4h13" stroke="#c4c4c4" stroke-width="1.2"/></svg>
<div class="a" style="left:1052.7px;top:170.0px;font-size:13px;line-height:15px;color:#c4c4c4">MyBox</div>
<svg class="a" style="left:1180.4px;top:172.3px" width="18" height="16"><rect x="0" y="0" width="15" height="11.5" fill="#1d5a20"/></svg>
<div class="a" style="left:1204px;top:170.0px;font-size:13px;line-height:15px;color:#c4c4c4">Box</div>
<svg class="a" style="left:1025.5px;top:197.7px" width="13" height="7" viewBox="0 0 13 7"><path d="M0 1.6h13 M0 5.4h13" stroke="#c4c4c4" stroke-width="1.2"/></svg>
<div class="a" style="left:1052.7px;top:193.2px;font-size:13px;line-height:15px;color:#c4c4c4">MyCircle</div>
<svg class="a" style="left:1179.6px;top:193px" width="18" height="16"><circle cx="7.7" cy="7.7" r="7.6" fill="#1d5a20"/></svg>
<div class="a" style="left:1204px;top:193.2px;font-size:13px;line-height:15px;color:#c4c4c4">Circle</div>
<svg class="a" style="left:1025.5px;top:221.3px" width="13" height="7" viewBox="0 0 13 7"><path d="M0 1.6h13 M0 5.4h13" stroke="#c4c4c4" stroke-width="1.2"/></svg>
<div class="a" style="left:1052.7px;top:216.8px;font-size:13px;line-height:15px;color:#c4c4c4">MyEllipse</div>
<svg class="a" style="left:1178.8px;top:219px" width="19" height="12"><rect x="0" y="0" width="18.2" height="11" rx="5.5" fill="#1d5a20"/></svg>
<div class="a" style="left:1201px;top:216.8px;font-size:13px;line-height:15px;color:#c4c4c4">Ellipse</div>
<svg class="a" style="left:1025.5px;top:244.6px" width="13" height="7" viewBox="0 0 13 7"><path d="M0 1.6h13 M0 5.4h13" stroke="#c4c4c4" stroke-width="1.2"/></svg>
<div class="a" style="left:1052.7px;top:240.1px;font-size:13px;line-height:15px;color:#c4c4c4">MyLine</div>
<svg class="a" style="left:1181px;top:247px" width="18" height="16"><rect x="0" y="0" width="12.6" height="1.6" fill="#1d5a20"/></svg>
<div class="a" style="left:1204px;top:240.1px;font-size:13px;line-height:15px;color:#c4c4c4">Line</div>
<svg class="a" style="left:1025.5px;top:267.8px" width="13" height="7" viewBox="0 0 13 7"><path d="M0 1.6h13 M0 5.4h13" stroke="#c4c4c4" stroke-width="1.2"/></svg>
<div class="a" style="left:1052.7px;top:263.3px;font-size:13px;line-height:15px;color:#c4c4c4">MyPolygon</div>
<svg class="a" style="left:1179.6px;top:263px" width="18" height="16"><path d="M8 0 L16 5.8 L13 15 H3 L0 5.8Z" fill="#1d5a20"/></svg>
<div class="a" style="left:1204px;top:263.3px;font-size:13px;line-height:15px;color:#c4c4c4">Polygon</div>
<svg class="a" style="left:1025.5px;top:291.5px" width="13" height="7" viewBox="0 0 13 7"><path d="M0 1.6h13 M0 5.4h13" stroke="#c39b30" stroke-width="1.2"/></svg>
<div class="a" style="left:1052.7px;top:287.0px;font-size:13px;line-height:15px;color:#c39b30">MyRectangle</div>
<svg class="a" style="left:1161.2px;top:283.8px" width="19.7" height="18" viewBox="0 0 24 22">
 <path fill="#b9b9b9" fill-rule="evenodd" d="M2.1 2.7 Q2.1 1.5 3.3 1.5 H19 V10.1 H6 V17.9 H2.1 Z M6.1 5.6 h3.8 v3.4 h-3.8 Z M11.5 5.6 h3.5 v3.4 h-3.5 Z"/>
 <path fill="none" stroke="#b9b9b9" stroke-width="1.9" d="M14.2 12.2 h-1.6 a3.1 3.1 0 0 0 0 6.2 h1.6 M16.6 12.2 h1.6 a3.1 3.1 0 0 1 0 6.2 h-1.6 M12.4 15.3 h6"/>
</svg>
<svg class="a" style="left:1185px;top:285.5px" width="20" height="18" viewBox="0 0 20 18"><path d="M1 3.5 L16.5 1 L19 14.5 L3.5 17Z" fill="#1d5a20"/></svg>
<div class="a" style="left:1211px;top:287.0px;font-size:13px;line-height:15px;color:#c4c4c4">Rectangle</div>
<svg class="a" style="left:1010px;top:322px" width="13" height="7" viewBox="0 0 13 7"><path d="M0 1.6h13 M0 5.4h13" stroke="#c4c4c4" stroke-width="1.2"/></svg>
<div class="a" style="left:1038.5px;top:318.0px;font-size:13px;line-height:15px;color:#c4c4c4">New Annotation Set</div>
<svg class="a" style="left:1265px;top:316px" width="19" height="19" viewBox="0 0 24 24"><path fill="none" stroke="#c4c4c4" stroke-width="2.3" d="M6.8 9.3 L12 14.5 L17.2 9.3"/></svg>
<div class="a" style="left:1008px;top:360px;font-size:11px;line-height:14px;color:#9a9a9a;-webkit-text-stroke:0.3px #9a9a9a">Formulas</div>
<svg class="a" style="left:1061px;top:359px" width="17" height="17" viewBox="0 0 24 24"><path fill="#9a9a9a" d="M19 3H5c-1.1 0-2 .9-2 2v14c0 1.1.9 2 2 2h14c1.1 0 2-.9 2-2V5c0-1.1-.9-2-2-2zm-5.97 4.06L14.09 6l1.41 1.41L16.91 6l1.06 1.06-1.41 1.41 1.41 1.41-1.06 1.06-1.410-1.4-1.41 1.41-1.06-1.06 1.41-1.41-1.41-1.42zm-6.78.66h5v1.5h-5v-1.5zM11.5 16h-2v2H8v-2H6v-1.5h2v-2h1.5v2h2V16zm6.5 1.25h-5v-1.5h5v1.5zm0-2.5h-5v-1.5h5v1.5z"/></svg>
<svg class="a" style="left:1236px;top:358px" width="19" height="19" viewBox="0 0 24 24"><path fill="#8a8a8a" d="M12 2C6.48 2 2 6.48 2 12s4.48 10 10 10 10-4.48 10-10S17.52 2 12 2zm5 11h-4v4h-2v-4H7v-2h4V7h2v4h4v2z"/></svg>
<svg class="a" style="left:1265px;top:358px" width="19" height="19" viewBox="0 0 24 24"><path fill="none" stroke="#8a8a8a" stroke-width="2.3" d="M6.8 9.3 L12 14.5 L17.2 9.3"/></svg>
<div class="a" style="left:997px;top:382px;width:306px;height:2px;background:#1f1f1f"></div>
<div class="a tab" style="left:1027.5px;top:396px">Details</div>
<div class="a tab" style="left:1131px;top:396px;letter-spacing:1.2px">Info</div>
<div class="a uline" style="left:999px;top:424px;width:104px"></div>
<div class="a" style="left:1296px;top:425px;width:7px;height:224px;background:#5a5a5a;border-radius:3px 0 0 3px"></div>
<div class="a" style="left:1005.7px;top:437px;font-size:11.5px;line-height:14px;color:#9c9c9c;-webkit-text-stroke:0.35px #9c9c9c">Position</div>
<svg class="a" style="left:1267px;top:435px" width="18" height="18" viewBox="0 0 24 24"><path fill="none" stroke="#a0a0a0" stroke-width="2.3" d="M6.8 9.3 L12 14.5 L17.2 9.3"/></svg>
<div class="a" style="left:999px;top:464px;width:297px;height:1px;background:#4a4a4a"></div>
<div class="a" style="left:1005.7px;top:479px;font-size:11.5px;line-height:14px;color:#c4c4c4">Unit</div>
<div class="a" style="left:1231px;top:479px;width:49px;height:15px;background:#626262;border-radius:3px;font-size:12.5px;line-height:15.5px;color:#474747;padding-left:4.5px">Pixel</div>
<svg class="a" style="left:1266px;top:482px" width="12" height="10" viewBox="0 0 12 10"><path d="M1.8 2.2 L6 6.8 L10.2 2.2" fill="none" stroke="#474747" stroke-width="2"/></svg>
<div class="a" style="left:1005.7px;top:522.2px;font-size:11.5px;line-height:14px;color:#c4c4c4">Width</div>
<div class="a" style="left:1231px;top:519px;width:58px;height:21.5px;border:1px solid #a8a8a8;border-radius:4px;font-size:12px;line-height:21.5px;color:#c8c8c8;padding-left:3.5px;-webkit-text-stroke:0.3px #c8c8c8">416</div>
<div class="a" style="left:1005.7px;top:565.0px;font-size:11.5px;line-height:14px;color:#c4c4c4">Height</div>
<div class="a" style="left:1231px;top:562.7px;width:58px;height:21.5px;border:1px solid #a8a8a8;border-radius:4px;font-size:12px;line-height:21.5px;color:#c8c8c8;padding-left:3.5px;-webkit-text-stroke:0.3px #c8c8c8">311</div>
<div class="a" style="left:1005.7px;top:607.8px;font-size:11.5px;line-height:14px;color:#c4c4c4">Top</div>
<div class="a" style="left:1231px;top:606px;width:58px;height:21.5px;border:1px solid #a8a8a8;border-radius:4px;font-size:12px;line-height:21.5px;color:#c8c8c8;padding-left:3.5px;-webkit-text-stroke:0.3px #c8c8c8">90</div>
<div class="a" style="left:1005.7px;top:652.0px;font-size:11.5px;line-height:14px;color:#c4c4c4">Left</div>
<div class="a" style="left:1231px;top:648.7px;width:58px;height:21.5px;border:1px solid #a8a8a8;border-radius:4px;font-size:12px;line-height:21.5px;color:#c8c8c8;padding-left:3.5px;-webkit-text-stroke:0.3px #c8c8c8">117</div>
<div class="a" style="left:1005.7px;top:693.8px;font-size:11.5px;line-height:14px;color:#c4c4c4">Angle °</div>
<div class="a" style="left:1231px;top:691.5px;width:58px;height:21.5px;border:1px solid #a8a8a8;border-radius:4px;font-size:12px;line-height:21.5px;color:#c8c8c8;padding-left:3.5px;-webkit-text-stroke:0.3px #c8c8c8">0</div>
<div class="a" style="left:1296px;top:649px;width:1px;height:53px;background:#3a3a3a"></div>
<div class="a" style="left:999px;top:702px;width:295px;height:8px;background:#5a5a5a;border-radius:3px 3px 0 0"></div>
<div class="a" style="left:1296px;top:702px;width:7px;height:8px;background:#8a8a8a"></div>
<div class="a tab" style="left:1060px;top:66px">My Workflow</div>
<div class="a tab" style="left:1203px;top:66px">Output</div>
<div class="a uline" style="left:1031px;top:93px;width:143px"></div>

<!-- MODAL -->
<div class="a" style="left:457px;top:236px;width:389px;height:270px;background:#424242;border-radius:14px;box-shadow:0 8px 24px rgba(0,0,0,.45)"></div>
<div class="a" style="left:471.7px;top:257px;font-size:17px;line-height:20px;color:#ececec;white-space:nowrap;-webkit-text-stroke:0.3px #ececec">Image annotation usages</div>
<svg class="a" style="left:800px;top:257.3px" width="24" height="24" viewBox="0 0 24 24"><path fill="#e8e8e8" d="M19 6.41L17.59 5 12 10.59 6.41 5 5 6.41 10.59 12 5 17.59 6.41 19 12 13.41 17.59 19 19 17.59 13.41 12z"/></svg>
<div class="a" style="left:471.7px;top:297px;width:370px;font-size:14px;line-height:19.6px;color:#e6e6e6;letter-spacing:0.2px;white-space:nowrap;-webkit-text-stroke:0.3px #e6e6e6">Shows references to a given image annotation by<br>workflows or the active process. Image annotations can<br>only be removed if they are not used.</div>
<div class="a" style="left:457px;top:375.5px;width:389px;text-align:center;font-size:14px;line-height:18px;color:#e6e6e6;padding-left:1px;letter-spacing:0.2px;-webkit-text-stroke:0.3px #e6e6e6">Node Next</div>
<div class="a" style="left:490px;top:420px;font-size:15px;line-height:18px;color:#e6e6e6;white-space:nowrap;-webkit-text-stroke:0.35px #e6e6e6">Label: Get MyRectangle</div>
<div class="a" style="left:490px;top:439.5px;font-size:12.85px;line-height:16px;color:#c0c0c0;white-space:nowrap;-webkit-text-stroke:0.25px #c0c0c0">Id: f0dd603a-ee67-4ba1-9015-eecac8a91287</div>
<div class="a" style="left:490px;top:460.5px;font-size:12.85px;line-height:16px;color:#c0c0c0;white-space:nowrap;-webkit-text-stroke:0.25px #c0c0c0">Path: nodeSchemaId</div>
<svg class="a" style="left:785.5px;top:417px" width="24" height="24" viewBox="0 0 24 24"><path fill="#f0c428" d="M19 19H5V5h7V3H5c-1.11 0-2 .9-2 2v14c0 1.1.89 2 2 2h14c1.1 0 2-.9 2-2v-7h-2v7zM14 3v2h3.59l-9.83 9.83 1.41 1.41L19 6.41V10h2V3h-7z"/></svg>
</body></html>
